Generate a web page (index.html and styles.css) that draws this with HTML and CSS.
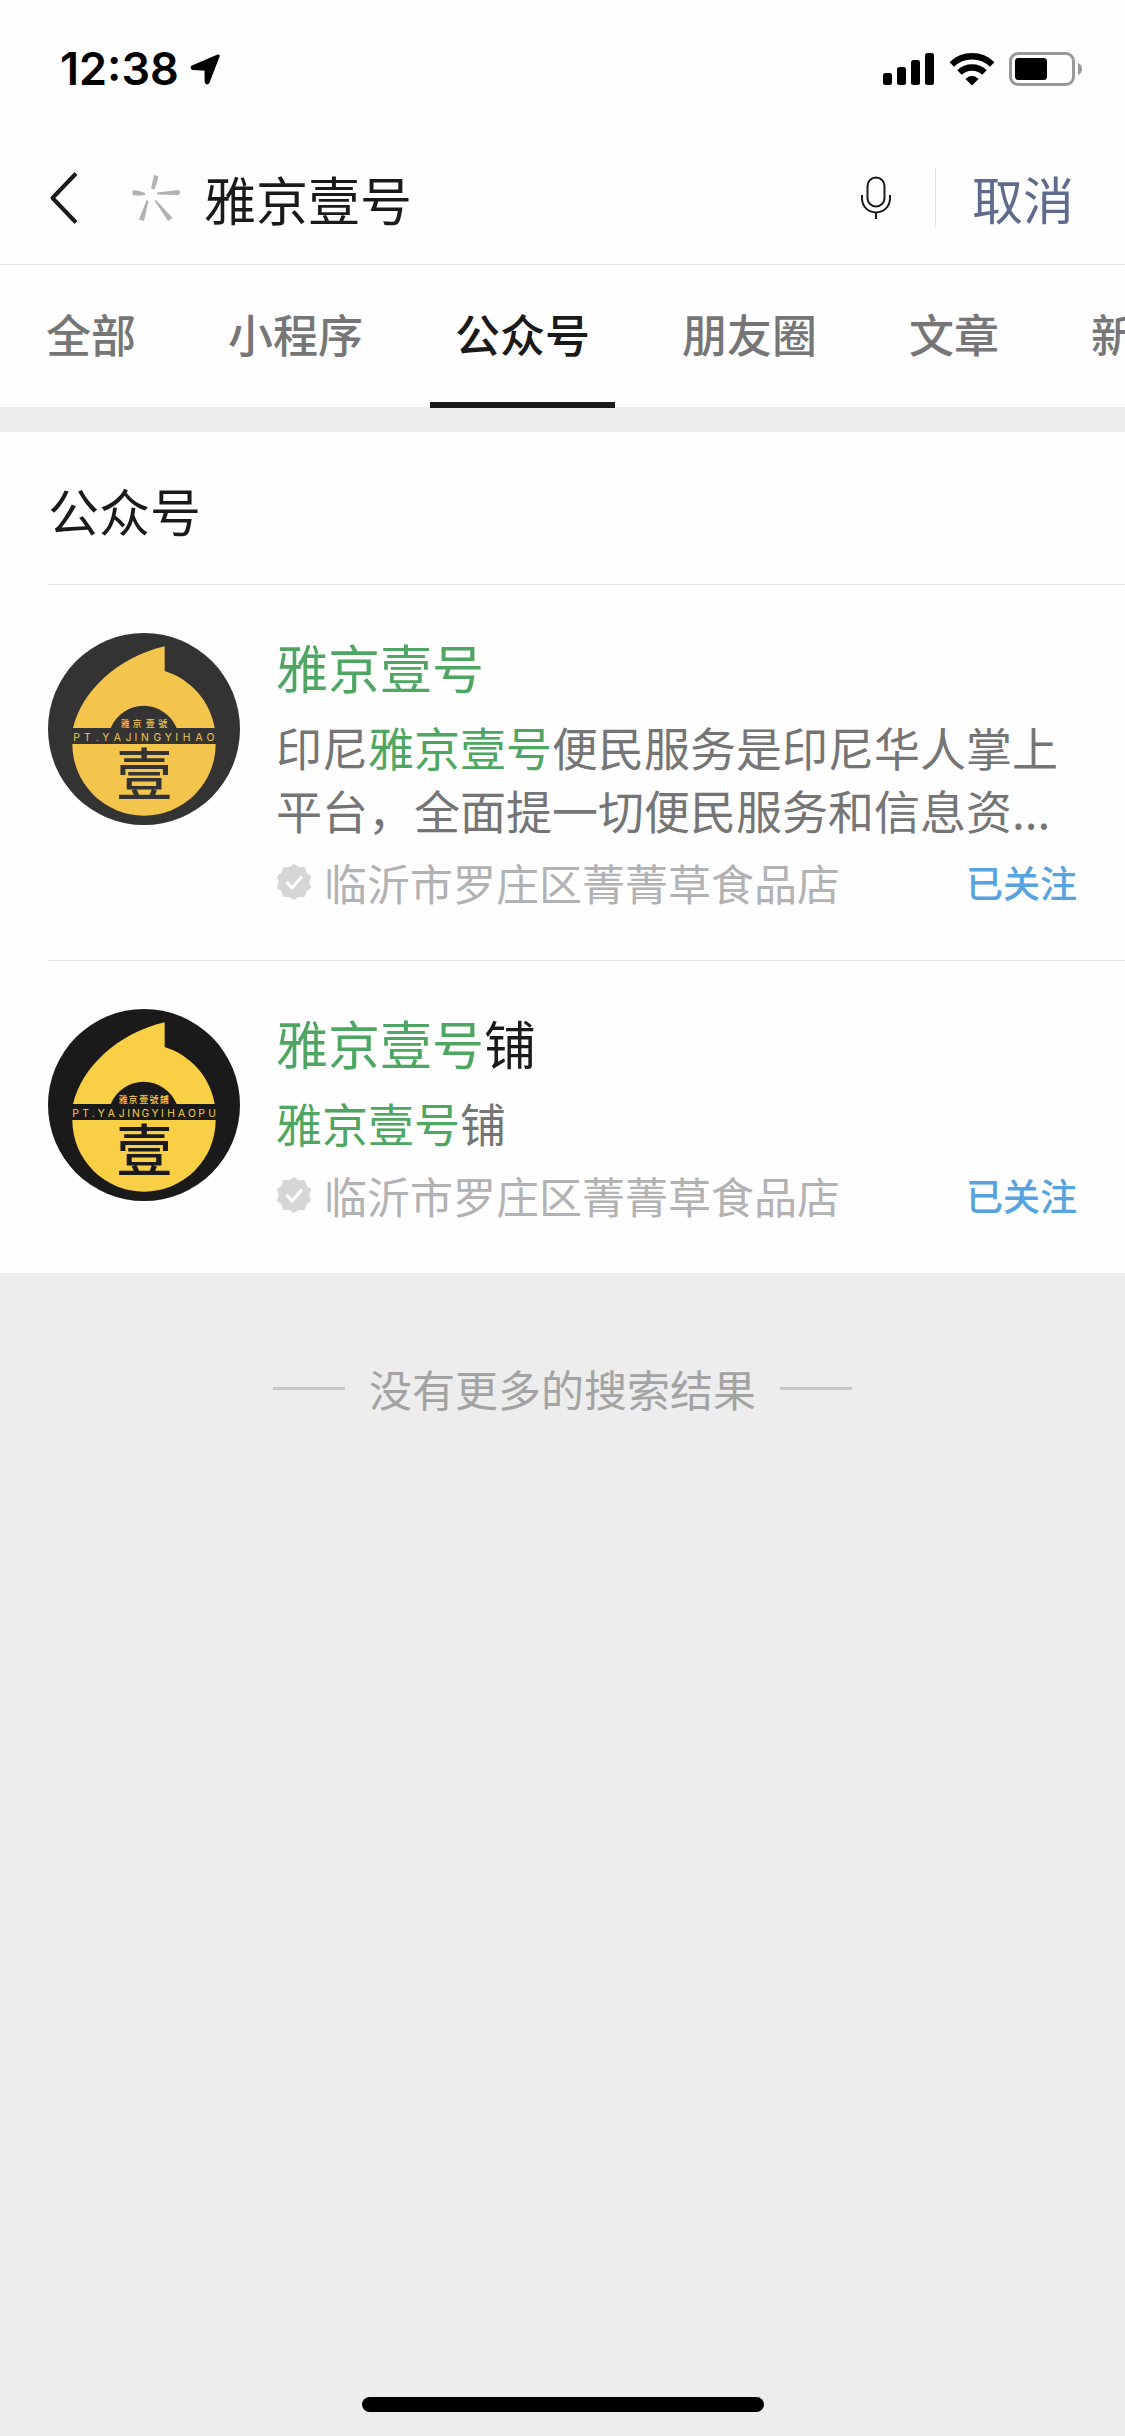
FILE: index.html
```html
<!DOCTYPE html>
<html lang="zh-CN">
<head>
<meta charset="utf-8">
<meta name="viewport" content="width=device-width, initial-scale=1">
<title>雅京壹号</title>
<link rel="stylesheet" href="styles.css">
</head>
<body>
<svg class="defs" width="0" height="0" aria-hidden="true">
  <defs>
    <symbol id="badge" viewBox="0 0 36 36">
      <path fill="#d6d6d6" stroke="#d6d6d6" stroke-width="2" stroke-linejoin="round" d="M18 1l4.600 3.200 5.500-.2 1.500 5.300 4.500 3.200-1.900 5.500 1.900 5.500-4.500 3.200-1.500 5.300-5.500-.2L18 35l-4.600-3.200-5.500.2-1.500-5.300-4.500-3.200L3.800 18l-1.900-5.500 4.500-3.200L7.900 4l5.500.2z"/>
      <path fill="none" stroke="#fff" stroke-width="3" d="M10.500 18l5.500 6 10-11.500"/>
    </symbol>
    <symbol id="emblem" viewBox="54 39 576 576">
      <path d="M129 324C155 215 262 112 404 79V153C480 177 540 240 554 324H440A107 107 0 0 0 242 324Z"/>
      <path d="M127 372H557A215 215 0 0 1 127 372Z"/>
    </symbol>
  </defs>
</svg>

<header class="top">
  <div class="status">
    <div class="status-left">
      <span class="clock">12:38</span>
      <svg width="30" height="31" viewBox="0 0 30 31"><path stroke="#000" stroke-width="3" stroke-linejoin="round" d="M28.200 2L2.500 12.800Q1.500 14 3 14.600L16 15.200 16.200 28Q17 30 18.200 28Z"/></svg>
    </div>
    <div class="status-right">
      <svg width="52" height="34" viewBox="0 0 52 34"><rect x="0" y="21" width="9" height="12" rx="2.500"/><rect x="14" y="15" width="9" height="18" rx="2.500"/><rect x="28" y="8" width="9" height="25" rx="2.500"/><rect x="42" y="1" width="9" height="32" rx="2.500"/></svg>
      <svg width="46" height="34" viewBox="0 0 46 34"><g fill="none" stroke="#000" stroke-width="6.500"><path d="M2.800 12.500A29 29 0 0 1 43.200 12.500"/><path d="M10.500 20.500A18 18 0 0 1 35.500 20.500"/></g><path d="M23 33.500L16.500 27Q23 20.500 29.500 27Z"/></svg>
      <svg width="74" height="34" viewBox="0 0 74 34"><rect x="1.500" y="1.500" width="63" height="31" rx="7.500" fill="none" stroke="#999" stroke-width="3"/><rect x="6" y="6" width="32" height="22" rx="3.500"/><path fill="#999" d="M69 11Q73 12.500 73 17T69 23Z"/></svg>
    </div>
  </div>
  <form class="search" role="search">
    <button class="icon-btn back" type="button" aria-label="返回">
      <svg width="30" height="54" viewBox="0 0 30 54"><path fill="none" stroke="#1a1a1a" stroke-width="4" stroke-linejoin="round" d="M27 2.500L3.500 27 27 51.500"/></svg>
    </button>
    <svg class="spark" width="48" height="48" viewBox="0 0 48 48" fill="#b2b2b2"><path d="M22 1l4 1q.5 3-3.500 13.500l-3.500-1zM.5 16.500q5-1 12.500 2.500v2Q5 22 .5 21zM25 18.500l21-2.500q2 0 2 2.500t-2 2.500l-21-.5zM14.500 26L7 45.500l5 1.500L16.500 27zM22.500 26.500L36 47l4.500-3L24 26z"/></svg>
    <input class="query" type="text" value="雅京壹号" aria-label="搜索">
    <button class="icon-btn" type="button" aria-label="语音输入">
      <svg width="32" height="44" viewBox="0 0 32 44" fill="none" stroke="#1a1a1a" stroke-width="2"><rect x="7.500" y="1.500" width="17" height="29" rx="8.500"/><path d="M2 19v3.500a14 14 0 0 0 28 0V19M16 36.500V43"/></svg>
    </button>
    <button class="cancel" type="button">取消</button>
  </form>
</header>

<nav class="tabs">
  <a class="tab" href="#all">全部</a>
  <a class="tab" href="#mini">小程序</a>
  <a class="tab active" href="#accounts" aria-current="page">公众号</a>
  <a class="tab" href="#moments">朋友圈</a>
  <a class="tab" href="#articles">文章</a>
  <a class="tab" href="#news">新闻</a>
</nav>

<main class="results" id="accounts">
  <h1 class="heading">公众号</h1>
  <article class="item">
    <svg class="avatar avatar-grey" viewBox="54 39 576 576" role="img" aria-label="雅京壹号">
      <circle class="disc" cx="342" cy="327" r="288"/>
      <use class="gold" href="#emblem" x="54" y="39" width="576" height="576"/>
      <text class="seal gold" x="286 321 361 398" y="322">雅京壹號</text>
      <text class="latin gold" x="140 172 202 227 262 295 318 345 382 415 440 470 507 541" y="363">PT.YAJINGYIHAO</text>
      <text class="mark disc" x="343" y="524">壹</text>
    </svg>
    <div class="info">
      <h2 class="name"><em>雅京壹号</em></h2>
      <p class="desc">印尼<em>雅京壹号</em>便民服务是印尼华人掌上平台，全面提一切便民服务和信息资...</p>
      <div class="meta">
        <svg width="36" height="36"><use href="#badge"/></svg>
        <span class="owner">临沂市罗庄区菁菁草食品店</span>
        <span class="followed">已关注</span>
      </div>
    </div>
  </article>
  <article class="item">
    <svg class="avatar avatar-black" viewBox="54 39 576 576" role="img" aria-label="雅京壹号铺">
      <circle class="disc" cx="342" cy="327" r="288"/>
      <use class="gold" href="#emblem" x="54" y="39" width="576" height="576"/>
      <text class="seal gold" x="280 309 341 372 403" y="322">雅京壹號鋪</text>
      <text class="latin gold" x="137 167 190 214 244 275 296 318 346 375 397 423 455 486 515 546" y="363">PT.YAJINGYIHAOPU</text>
      <text class="mark disc" x="343" y="524">壹</text>
    </svg>
    <div class="info">
      <h2 class="name"><em>雅京壹号</em>铺</h2>
      <p class="desc"><em>雅京壹号</em>铺</p>
      <div class="meta">
        <svg width="36" height="36"><use href="#badge"/></svg>
        <span class="owner">临沂市罗庄区菁菁草食品店</span>
        <span class="followed">已关注</span>
      </div>
    </div>
  </article>
</main>

<p class="end">没有更多的搜索结果</p>
<div class="home-bar"></div>
</body>
</html>
```

FILE: styles.css
```css
* {
  box-sizing: border-box;
}

body {
  margin: 0;
  min-height: 100vh;
  display: flex;
  flex-direction: column;
  overflow-x: hidden;
  background: #ededed;
  color: #1a1a1a;
  font-family: "Noto Sans CJK SC", "Noto Sans", sans-serif;
}

h1, h2, p {
  margin: 0;
  font-weight: 400;
}

em {
  font-style: normal;
  color: #4fa662;
}

button, input {
  padding: 0;
  border: 0;
  background: none;
  font: inherit;
  color: inherit;
}

svg {
  display: block;
  flex: none;
}

.defs {
  position: absolute;
}

.top {
  background: #fefefe;
  border-bottom: 1px solid #e0e0e0;
}

.status {
  display: flex;
  justify-content: space-between;
  align-items: center;
  height: 136px;
  padding: 2px 42px 0 60px;
}

.status-left, .status-right {
  display: flex;
  align-items: center;
  gap: 14px;
}

.status-left {
  gap: 11px;
}

.clock {
  font: 600 45px/56px Inter, sans-serif;
  color: #000;
}

.search {
  display: flex;
  align-items: center;
  height: 128px;
  padding: 0 51px 4px 49px;
}

.icon-btn {
  display: flex;
}

.back {
  margin-right: 53px;
}

.spark {
  margin-right: 24px;
}

.query {
  flex: 1;
  min-width: 0;
  height: 72px;
  font-size: 52px;
  outline: 0;
}

.cancel {
  margin-left: 43px;
  padding-left: 36px;
  border-left: 1px solid #e5e5e5;
  font-size: 51px;
  line-height: 60px;
  color: #5f6b8c;
}

.tabs {
  display: flex;
  align-items: flex-start;
  gap: 42px;
  height: 142px;
  padding-left: 21px;
  overflow-x: clip;
  background: #fefefe;
}

.tab {
  flex: none;
  height: 143px;
  padding: 0 25px;
  border-bottom: 6px solid transparent;
  font-size: 45px;
  font-weight: 500;
  line-height: 137px;
  color: #767676;
  text-decoration: none;
}

.tab.active {
  border-color: #1a1a1a;
  color: #1a1a1a;
}

.results {
  margin-top: 25px;
  background: #fefefe;
}

.heading {
  margin-left: 48px;
  padding: 42px 0 38px;
  font-size: 51px;
  line-height: 72px;
}

.item {
  display: flex;
  gap: 36px;
  margin-left: 48px;
  padding: 48px 48px 48px 0;
  border-top: 1px solid #e2e2e2;
}

.avatar {
  width: 192px;
  height: 192px;
}

.avatar-grey .disc {
  fill: #333;
}

.avatar-grey .gold {
  fill: #f3c54d;
}

.avatar-black .disc {
  fill: #1a1a1a;
}

.avatar-black .gold {
  fill: #f9cf45;
}

.seal {
  font-size: 27px;
  font-weight: 500;
  text-anchor: middle;
}

.latin {
  font: 400 31px Inter, sans-serif;
  text-anchor: middle;
}

.mark {
  font-size: 168px;
  font-weight: 500;
  text-anchor: middle;
}

.info {
  flex: 1;
  min-width: 0;
}

.name {
  font-size: 52px;
  line-height: 68px;
}

.desc {
  margin-top: 14px;
  font-size: 46px;
  line-height: 63px;
  color: #757575;
}

.meta {
  display: flex;
  align-items: center;
  gap: 12px;
  margin-top: 11px;
  font-size: 43px;
  line-height: 60px;
  color: #b2b2b2;
}

.owner {
  flex: 1;
}

.followed {
  font-size: 37px;
  font-weight: 500;
  color: #57a3df;
}

.end {
  display: flex;
  justify-content: center;
  align-items: center;
  gap: 24px;
  margin-top: 85px;
  font-size: 43px;
  line-height: 60px;
  color: #a3a3a3;
}

.end::before, .end::after {
  content: "";
  width: 72px;
  height: 3px;
  background: #c8c8c8;
}

.home-bar {
  width: 402px;
  height: 15px;
  margin: auto auto 24px;
  border-radius: 8px;
  background: #000;
}
```
